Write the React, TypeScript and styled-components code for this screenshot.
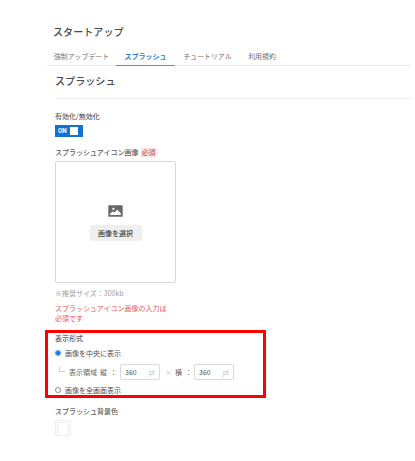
import React from 'react';
import styled, { createGlobalStyle } from 'styled-components';

const GlobalStyle = createGlobalStyle`
  * { box-sizing: border-box; }
  body {
    margin: 0;
    background: #fff;
    color: #666;
    font-family: "Noto Sans CJK JP", sans-serif;
    font-size: 7px;
    line-height: 10px;
    overflow: hidden;
  }
`;

const Page = styled.main`
  width: 415px;
  height: 461px;
  padding: 24px 4px 0 47px;
  background: #fff;
`;

const Title = styled.h1`
  margin: 0 0 7px 6px;
  font-size: 10.1px;
  line-height: 16px;
  font-weight: 500;
  color: #4a4a4a;
`;

const Tabs = styled.nav`
  display: flex;
  height: 19px;
  border-bottom: 1px solid #e8e9ea;
`;

const Tab = styled.a<{ $active?: boolean; $width: number }>`
  width: ${p => p.$width}px;
  height: 19px;
  line-height: 18px;
  text-align: center;
  white-space: nowrap;
  font-size: ${p => (p.$active ? '7px' : '6.9px')};
  font-weight: ${p => (p.$active ? 700 : 400)};
  color: ${p => (p.$active ? '#2b7fd8' : '#707070')};
  border-bottom: 1px solid ${p => (p.$active ? '#4b97e0' : 'transparent')};
`;

const SectionHeader = styled.h2`
  margin: 0 0 0 8px;
  padding: 7px 0 0;
  height: 33px;
  font-size: 10.1px;
  line-height: 16px;
  font-weight: 500;
  color: #4a4a4a;
  border-bottom: 1px solid #f0f0f0;
`;

const Form = styled.form`
  display: flex;
  flex-direction: column;
  align-items: flex-start;
  padding: 12px 0 0 8px;
`;

const Label = styled.div`
  display: flex;
  align-items: center;
  height: 10px;
  font-weight: 500;
  color: #606060;
  white-space: nowrap;
`;

const Switch = styled.button`
  display: flex;
  align-items: center;
  justify-content: space-between;
  width: 28px;
  height: 12px;
  margin: 4px 0 10px;
  padding: 0 5px 0 3px;
  border: 0;
  background: #1272d3;
  color: #fff;
  font: 700 6.3px/12px Roboto, sans-serif;
`;

const Knob = styled.span`
  width: 8px;
  height: 8px;
  background: #fff;
`;

const Required = styled.span`
  margin-left: 2px;
  width: 16px;
  height: 9px;
  line-height: 9px;
  text-align: center;
  background: #fde6e2;
  color: #bd6559;
`;

const Uploader = styled.div`
  display: flex;
  flex-direction: column;
  align-items: center;
  width: 121px;
  height: 122px;
  margin-top: 4px;
  padding-top: 43px;
  border: 1px solid #d9d9d9;
  border-radius: 2px;
`;

const PickButton = styled.button`
  width: 52px;
  height: 16px;
  margin-top: 8px;
  padding: 0;
  border: 0;
  border-radius: 2px;
  background: #efefef;
  color: #444;
  font: 500 7px/16px "Noto Sans CJK JP", sans-serif;
`;

const Hint = styled.div`
  margin-top: 5px;
  color: #a0a0a0;
  white-space: nowrap;
`;

const ErrorText = styled.div`
  width: 118px;
  margin: 5px 0 0;
  color: #f25255;
`;

const DisplayGroup = styled.div`
  position: relative;
  width: 208px;
  height: 62px;
  margin: 10px 0 11px;
`;

const Highlight = styled.div`
  position: absolute;
  top: -3px;
  left: -10px;
  width: 221px;
  height: 68px;
  border: 3px solid #ff0000;
  pointer-events: none;
`;

const Option = styled.label`
  display: flex;
  align-items: center;
  height: 10px;
  margin-top: 5px;
  gap: 4px;
  color: #505050;
  white-space: nowrap;
`;

const Radio = styled.span<{ $checked?: boolean }>`
  display: flex;
  align-items: center;
  justify-content: center;
  width: 6px;
  height: 6px;
  border: 1px solid ${p => (p.$checked ? '#3b91f8' : '#8c8c8c')};
  border-radius: 50%;
  &::after {
    content: '';
    width: 4px;
    height: 4px;
    flex: none;
    border-radius: 50%;
    background: ${p => (p.$checked ? '#0b75f5' : 'transparent')};
  }
`;

const SizeRow = styled.div`
  display: flex;
  align-items: center;
  height: 16px;
  margin-top: 6px;
  padding-left: 4px;
  white-space: nowrap;
`;

const Branch = styled.span`
  width: 6px;
  height: 5px;
  margin: 0 4px 5px 0;
  border-left: 1px solid #ccc;
  border-bottom: 1px solid #ccc;
`;

const SizeText = styled.span<{ $width: number }>`
  display: flex;
  gap: 3px;
  width: ${p => p.$width}px;
  flex: none;
`;

const Times = styled.span`
  width: 15px;
  padding-left: 5px;
  color: #bbb;
`;

const Field = styled.div`
  display: flex;
  align-items: center;
  justify-content: space-between;
  width: 40px;
  height: 16px;
  padding: 0 4px;
  border: 1px solid #d9d9d9;
  border-radius: 2px;
  color: #555;
`;

const Unit = styled.span`
  font-size: 6.5px;
  color: #c4c4c4;
`;

const Swatch = styled.div`
  width: 16px;
  height: 16px;
  margin-top: 4px;
  padding: 1px;
  border: 1px solid #eceef1;
  border-radius: 2px;
  &::after {
    content: '';
    display: block;
    height: 100%;
    border: 1px solid #eceef2;
    border-radius: 1px;
  }
`;

const ImageIcon = () => (
  <svg width="15" height="12" viewBox="0 0 15 12">
    <rect x="0.3" y="0.2" width="14.4" height="11.6" rx="0.6" fill="#686868" />
    <circle cx="5.4" cy="3.9" r="1.1" fill="#fff" />
    <path d="M2.2 10V8.4L4.6 6.6L6.4 7.6L9.2 4.8L12.8 8.2V10Z" fill="#fff" />
  </svg>
);

const SizeField = ({ value }: { value: number }) => (
  <Field>
    <span>{value}</span>
    <Unit>pt</Unit>
  </Field>
);

export default function App() {
  return (
    <>
      <GlobalStyle />
      <Page>
        <Title>スタートアップ</Title>
        <Tabs>
          <Tab $width={69}>強制アップデート</Tab>
          <Tab $width={59} $active>スプラッシュ</Tab>
          <Tab $width={65}>チュートリアル</Tab>
          <Tab $width={44}>利用規約</Tab>
        </Tabs>
        <SectionHeader>スプラッシュ</SectionHeader>
        <Form>
          <Label>有効化/無効化</Label>
          <Switch type="button">ON<Knob /></Switch>
          <Label>スプラッシュアイコン画像<Required>必須</Required></Label>
          <Uploader>
            <ImageIcon />
            <PickButton type="button">画像を選択</PickButton>
          </Uploader>
          <Hint>※推奨サイズ：300kb</Hint>
          <ErrorText>スプラッシュアイコン画像の入力は必須です</ErrorText>
          <DisplayGroup>
            <Label>表示形式</Label>
            <Option><Radio $checked />画像を中央に表示</Option>
            <SizeRow>
              <Branch />
              <SizeText $width={51}>
                <span>表示領域</span>
                <span>縦</span>
                <span>：</span>
              </SizeText>
              <SizeField value={360} />
              <Times>×</Times>
              <SizeText $width={19}>
                <span>横</span>
                <span>：</span>
              </SizeText>
              <SizeField value={360} />
            </SizeRow>
            <Option><Radio />画像を全画面表示</Option>
            <Highlight />
          </DisplayGroup>
          <Label>スプラッシュ背景色</Label>
          <Swatch />
        </Form>
      </Page>
    </>
  );
}
